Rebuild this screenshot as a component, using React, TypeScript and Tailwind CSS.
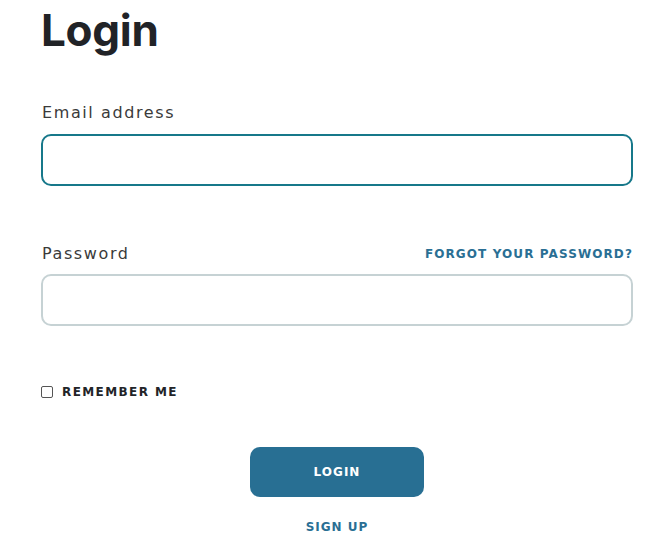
import { useState } from "react";

export default function App() {
  const [remember, setRemember] = useState(false);

  return (
    <div className="min-h-screen bg-white pl-[41px] pr-[39px]">
      {/* TITLE */}
      <h1 className="pt-[4px] text-[44px] font-bold leading-[52px] text-[#212327] font-['Inter',sans-serif] tracking-[-0.3px]">
        Login
      </h1>

      <form className="flex flex-col" onSubmit={(e) => e.preventDefault()}>
        {/* EMAIL */}
        <label className="mt-[47px] pl-[1px] text-[16px] leading-[20px] tracking-[1.6px] text-[#3a3a3a] font-['DejaVu_Sans',sans-serif]">
          Email address
        </label>
        <input
          type="email"
          className="mt-[11px] h-[52px] w-full rounded-[10px] border-2 border-[#17788a] px-4 outline-none"
        />

        {/* PASSWORD */}
        <div className="mt-[58px] flex items-center justify-between">
          <label className="pl-[1px] text-[16px] leading-[20px] tracking-[1.6px] text-[#3a3a3a] font-['DejaVu_Sans',sans-serif]">
            Password
          </label>
          <a
            href="#"
            className="text-[12px] font-bold tracking-[1.1px] text-[#2a6f94] font-['DejaVu_Sans',sans-serif]"
          >
            FORGOT YOUR PASSWORD?
          </a>
        </div>
        <input
          type="password"
          className="mt-[10px] h-[52px] w-full rounded-[10px] border-2 border-[#c6d2d4] px-4 outline-none"
        />

        {/* REMEMBER */}
        <label className="mt-[57px] flex items-center gap-[9px]">
          <input
            type="checkbox"
            checked={remember}
            onChange={(e) => setRemember(e.target.checked)}
            className="h-[12px] w-[12px] appearance-none rounded-[2px] border border-[#555] bg-white"
          />
          <span className="text-[12px] font-bold tracking-[1.4px] text-[#222428] font-['DejaVu_Sans',sans-serif]">
            REMEMBER ME
          </span>
        </label>

        {/* ACTIONS */}
        <div className="mt-[46px] flex flex-col items-center">
          <button
            type="submit"
            className="h-[50px] w-[174px] rounded-[10px] bg-[#286f93] text-[12px] font-bold tracking-[1px] text-white font-['DejaVu_Sans',sans-serif]"
          >
            LOGIN
          </button>
          <a
            href="#"
            className="mt-[21px] text-[12px] font-bold tracking-[1px] text-[#2a6f94] font-['DejaVu_Sans',sans-serif]"
          >
            SIGN UP
          </a>
        </div>
      </form>
    </div>
  );
}
